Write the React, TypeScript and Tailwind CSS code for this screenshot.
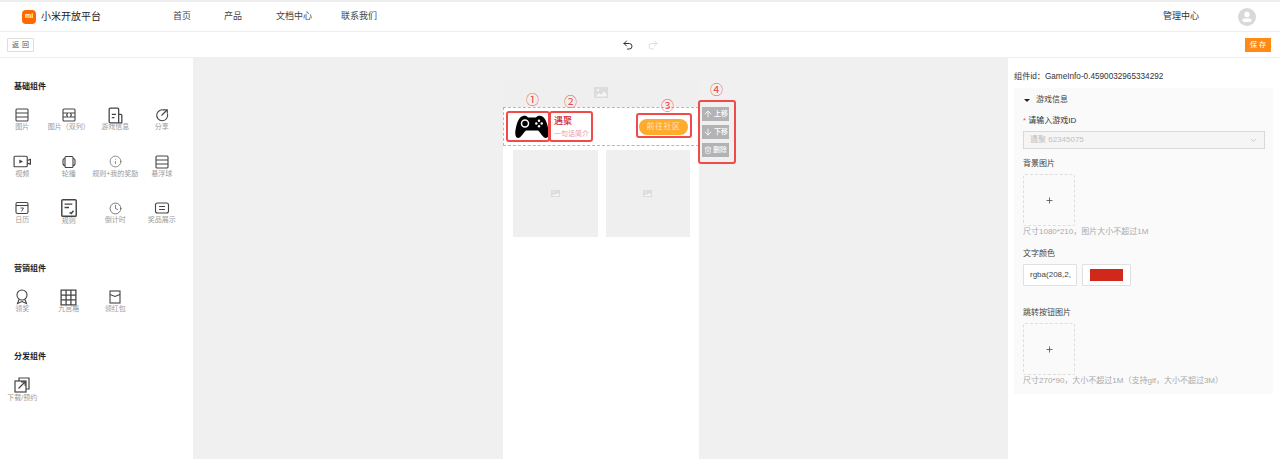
import { ArrowDown, ArrowUp, ChevronDown, Clock, Info, Plus, Redo2, Trash2, Undo2 } from "lucide-react"
import type { ReactNode } from "react"

const font = { fontFamily: '"Liberation Sans", "Noto Sans CJK SC", sans-serif' }

type TileItem = { label: string; icon: ReactNode; tall?: boolean }

// little stroke icons for the component palette
function Ico({ children, size = 18, sw = 1.1 }: { children: ReactNode; size?: number; sw?: number }) {
  return (
    <svg width={size} height={size} viewBox="0 0 18 18" fill="none" stroke="#444" strokeWidth={sw}>
      {children}
    </svg>
  )
}

const rows = <><rect x="3" y="3" width="12" height="12" rx="1" /><path d="M3 7h12M3 11h12" /></>

const basic: TileItem[] = [
  { label: "图片", icon: <Ico>{rows}</Ico> },
  { label: "图片（双列）", icon: <Ico><rect x="3" y="3" width="12" height="12" rx="1" /><path d="M3 7h5l-1.500 2L8 11H3M15 7h-5l1.500 2L10 11h5" /></Ico> },
  { label: "游戏信息", icon: <Ico size={19} sw={1.200}><path d="M3 3a1 1 0 0 1 1-1h7a1 1 0 0 1 1 1v13H4a1 1 0 0 1-1-1zM12 8h2a1 1 0 0 1 1 1v7h-3M5.500 8h4M5.500 11h2.500" /></Ico> },
  { label: "分享", icon: <Ico><path d="M11.500 4.300a5.500 5.500 0 1 0 3 3.500M8.500 9.500L14 4M10.500 3.700H14.300V7.500" /></Ico> },
  { label: "视频", icon: <Ico size={19}><rect x="1" y="4" width="12.500" height="10" rx="1" /><path d="M13.500 8l3-1v4.500l-3-1" /><path d="M6 7l3.500 2L6 11z" fill="#444" stroke="none" /></Ico> },
  { label: "轮播", icon: <Ico><rect x="5" y="3.500" width="8" height="11" rx="1" /><path d="M5 5.500C3.500 5.500 3 6.500 3 7.500v3c0 1 .5 2 2 2M13 5.500c1.500 0 2 1 2 2v3c0 1-.5 2-2 2" /></Ico> },
  { label: "规则+我的奖励", icon: <Info size={13} strokeWidth={1.100} color="#444" /> },
  { label: "悬浮球", icon: <Ico>{rows}</Ico> },
  { label: "日历", icon: <Ico><rect x="3" y="3.500" width="12" height="11" rx="1.500" /><path d="M3 6.500h12" /><path d="M7.500 9h3L8.500 12.500" strokeWidth={0.900} /></Ico> },
  { label: "规则", tall: true, icon: <Ico size={20} sw={1.300}><rect x="2.500" y="1.500" width="13" height="15" rx="1" /><path d="M5 5.500h7M5 8.500h4M9.500 13l1.500 1 2-2.500" /></Ico> },
  { label: "倒计时", icon: <Clock size={13} strokeWidth={1.300} color="#444" /> },
  { label: "奖品展示", icon: <Ico><rect x="2.500" y="4" width="13" height="10" rx="2" /><path d="M6 7.500h6M6 10.500h6" /></Ico> },
]

const marketing: TileItem[] = [
  { label: "领奖", icon: <Ico><circle cx="9" cy="7" r="5" /><path d="M6 11.500L4.500 15.500 9 13.500l4.500 2-1.500-4" /></Ico> },
  { label: "九宫格", icon: <Ico size={19} sw={1.200}><rect x="2" y="2" width="14" height="14" /><path d="M6.700 2v14M11.300 2v14M2 6.700h14M2 11.300h14" /></Ico> },
  { label: "领红包", icon: <Ico><rect x="4" y="3" width="10" height="12" /><path d="M4 6.500l5 2 5-2" /></Ico> },
]

const publish: TileItem[] = [
  { label: "下载/预约", tall: true, icon: <Ico size={18} sw={1.200}><path d="M6 5V2h10v11h-3" /><rect x="2" y="5" width="11" height="11" /><path d="M5.500 12.500L12 6M8 5.800h4.200V10" /></Ico> },
]

function Tile({ icon, label, tall }: TileItem) {
  return (
    <div className="flex flex-col items-center">
      <div className="flex h-[18px] items-center justify-center">{icon}</div>
      <span className={`whitespace-nowrap text-[7px] leading-[12px] text-[#9a9a9a] ${tall ? "-mt-[2px]" : "-mt-[3px]"}`}>{label}</span>
    </div>
  )
}

function TileGrid({ items, className }: { items: TileItem[]; className: string }) {
  return (
    <div className={`-ml-[1px] grid h-auto w-[186px] auto-rows-[27px] grid-cols-4 gap-y-[19.500px] ${className}`}>
      {items.map((item) => (
        <Tile key={item.label} {...item} />
      ))}
    </div>
  )
}

function SidePanel() {
  return (
    <div className="w-[193px] shrink-0 bg-white pt-[23px]">
      <h3 className="pl-[14px] text-[8px] font-bold leading-[12px] text-[#222]">基础组件</h3>
      <TileGrid items={basic} className="mt-[13px]" />
      <h3 className="mt-[37px] pl-[14px] text-[8px] font-bold leading-[12px] text-[#222]">营销组件</h3>
      <TileGrid items={marketing} className="mt-[13px]" />
      <h3 className="mt-[36px] pl-[14px] text-[8px] font-bold leading-[12px] text-[#222]">分发组件</h3>
      <TileGrid items={publish} className="mt-[13px]" />
    </div>
  )
}

function PicIcon({ w, h, color }: { w: number; h: number; color: string }) {
  return (
    <svg width={w} height={h} viewBox="0 0 14 11">
      <rect width="14" height="11" fill={color} />
      <circle cx="4" cy="3" r="1.200" fill="#f5f5f5" />
      <path d="M1.500 9.500L5 6l2 2 3-3.500 2.500 3v2z" fill="#f5f5f5" />
    </svg>
  )
}

function Canvas() {
  return (
    <div className="flex flex-1 justify-center bg-[#f0f0f0] pl-[1px] pt-[22px]">
      <div className="relative w-[196px] bg-white">
        <div className="flex h-[27px] items-center justify-center bg-[#efefef] pb-[2px]">
          <PicIcon w={14} h={11} color="#dcdcdc" />
        </div>

        {/* selected game row */}
        <div className="flex h-[39px] items-center justify-between border border-dashed border-[#ffa940] pl-[11px] pr-[10px]">
          <div className="flex items-center gap-[5px]">
            <svg width="34" height="24" viewBox="0 0 34 24">
              <path d="M8 1c2-.5 4 0 5 1.500h8C22 1 24 .5 26 1c4 1 6 6 7.500 14 .7 4.500 0 8-2.500 8-3 0-5-5-8-7.500H11C8 18 6 23 3 23c-2.500 0-3.200-3.500-2.500-8C2 7 4 2 8 1z" fill="#000" />
              <circle cx="10" cy="8.500" r="3.500" fill="none" stroke="#fff" strokeWidth="1.500" />
              <circle cx="24" cy="5.800" r="1.200" fill="#fff" />
              <circle cx="24" cy="11.200" r="1.200" fill="#fff" />
              <circle cx="21.300" cy="8.500" r="1.200" fill="#fff" />
              <circle cx="26.700" cy="8.500" r="1.200" fill="#fff" />
            </svg>
            <div className="leading-none">
              <div className="text-[9px] font-medium leading-[12px] text-[#d0283b]">遇聚</div>
              <div className="mt-[2px] text-[7px] leading-[9px] text-[#eb9ab0]">一句话简介</div>
            </div>
          </div>
          <div className="flex h-[16px] w-[49px] items-center justify-center rounded-full bg-[#ffab2e] text-[8px] tracking-[0.5px] text-white/70">前往社区</div>
        </div>

        <div className="mt-[4px] flex gap-[8px] pl-[10px]">
          {[0, 1].map((i) => (
            <div key={i} className="flex h-[87px] w-[84.500px] items-center justify-center bg-[#efefef]">
              <PicIcon w={9} h={7} color="#dcdcdc" />
            </div>
          ))}
        </div>

        {/* annotations on top of the canvas */}
        <span className="absolute left-[23px] top-[12px] text-[13px] leading-[15px] text-[#f04a4a]">①</span>
        <span className="absolute left-[61px] top-[14px] text-[13px] leading-[15px] text-[#f04a4a]">②</span>
        <span className="absolute left-[158px] top-[18px] text-[13px] leading-[15px] text-[#f04a4a]">③</span>
        <span className="absolute left-[207px] top-[2px] text-[13px] leading-[15px] text-[#f04a4a]">④</span>
        <div className="absolute left-[3px] top-[31px] h-[31px] w-[44px] rounded-[3px] border-[2px] border-[#f04a4a]" />
        <div className="absolute left-[46px] top-[31px] h-[31px] w-[44px] rounded-[3px] border-[2px] border-[#f04a4a]" />
        <div className="absolute left-[133px] top-[33px] h-[25px] w-[56px] rounded-[3px] border-[2px] border-[#f04a4a]" />

        <div className="absolute left-[195px] top-[20px] flex h-[64px] w-[38px] flex-col items-start justify-center gap-[4px] rounded-[3px] border-[2px] border-[#f04a4a] bg-[#f0f0f0] pl-[2px]">
          {[
            { label: "上移", icon: <ArrowUp size={10} /> },
            { label: "下移", icon: <ArrowDown size={10} /> },
            { label: "删除", icon: <Trash2 size={8} /> },
          ].map((b) => (
            <div key={b.label} className="flex h-[14px] w-[27px] shrink-0 items-center justify-center gap-[1px] bg-[#b3b3b3] text-[7px] font-medium text-white">
              {b.icon}
              <span>{b.label}</span>
            </div>
          ))}
        </div>
      </div>
    </div>
  )
}

function Upload({ hint }: { hint: string }) {
  return (
    <>
      <div className="flex h-[52px] w-[52px] items-center justify-center rounded-[2px] border border-dashed border-[#dedede] bg-[#fafafa]">
        <Plus size={9} color="#444" />
      </div>
      <p className="whitespace-nowrap text-[8px] leading-[12px] text-[#aaa]">{hint}</p>
    </>
  )
}

function SettingsPanel() {
  return (
    <div className="w-[272px] shrink-0 bg-white pl-[6px] pr-[7px] pt-[13px]">
      <p className="whitespace-nowrap text-[8.200px] leading-[12px] text-[#333]">组件id：GameInfo-0.4590032965334292</p>
      <div className="mt-[5px] h-[306px] bg-[#fafafa] pl-[9px] pr-[8px]">
        <div className="flex h-[24px] items-center gap-[6px] pl-[1px] text-[8px] text-[#444]">
          <span className="h-0 w-0 border-x-[3px] border-t-[3px] border-x-transparent border-t-[#222]" />
          游戏信息
        </div>
        <p className="mt-[3px] text-[8px] leading-[12px] text-[#333]"><span className="text-[#ff4d4f]">* </span>请输入游戏ID</p>
        <div className="mt-[4px] flex h-[18px] w-[242px] items-center justify-between border border-[#d9d9d9] bg-[#f5f5f5] pl-[6px] pr-[6px] text-[8px] text-[#bfbfbf]">
          遇聚 62345075
          <ChevronDown size={9} color="#bfbfbf" />
        </div>
        <p className="mb-[4px] mt-[9px] text-[8px] leading-[12px] text-[#444]">背景图片</p>
        <Upload hint="尺寸1080*210，图片大小不超过1M" />
        <p className="mb-[4px] mt-[10px] text-[8px] leading-[12px] text-[#444]">文字颜色</p>
        <div className="flex gap-[5px]">
          <div className="flex h-[22px] w-[54px] items-center rounded-[1px] border border-[#e0e0e0] bg-white pl-[6px] text-[8px] text-[#444]">rgba(208,2,</div>
          <div className="flex h-[22px] w-[49px] items-center justify-center rounded-[1px] border border-[#e0e0e0] bg-white">
            <div className="h-[12px] w-[33px] bg-[#d0281b]" />
          </div>
        </div>
        <p className="mb-[4px] mt-[21px] text-[8px] leading-[12px] text-[#444]">跳转按钮图片</p>
        <Upload hint="尺寸270*90，大小不超过1M（支持gif，大小不超过3M）" />
      </div>
    </div>
  )
}

export default function App() {
  return (
    <div className="flex h-[459px] flex-col overflow-hidden bg-white" style={font}>
      <div className="h-[2px] shrink-0 bg-[#eee]" />
      <header className="flex h-[30px] shrink-0 items-center border-b border-[#eee] pl-[22px] pr-[24px]">
        <div className="flex h-[14px] w-[14px] items-center justify-center rounded-[4px] bg-[#ff6900] text-[7px] font-bold text-white">mi</div>
        <span className="ml-[5px] text-[10px] text-[#222]">小米开放平台</span>
        <nav className="ml-[72px] flex text-[9px] text-[#444]">
          <span>首页</span>
          <span className="ml-[33px]">产品</span>
          <span className="ml-[34px]">文档中心</span>
          <span className="ml-[29px]">联系我们</span>
        </nav>
        <span className="ml-auto text-[9px] text-[#333]">管理中心</span>
        <div className="ml-[39px] flex h-[18px] w-[18px] items-center justify-center rounded-full bg-[#d9d9d9]">
          <svg width="12" height="12" viewBox="0 0 12 12" fill="#fff">
            <circle cx="6" cy="3.500" r="2.700" />
            <rect x="1.500" y="7.500" width="9" height="3.500" rx="1.700" />
          </svg>
        </div>
      </header>

      <div className="relative flex h-[26px] shrink-0 items-center justify-center border-b border-[#eee]">
        <div className="absolute left-[7px] top-[6px] flex h-[14px] w-[27px] items-center justify-center rounded-[1px] border border-[#ddd] pl-[3px] text-[7px] tracking-[3px] text-[#555]">返回</div>
        <div className="flex gap-[13px]">
          <Undo2 size={12} color="#333" />
          <Redo2 size={12} color="#ddd" />
        </div>
        <div className="absolute right-[9px] top-[6px] flex h-[14px] w-[26px] items-center justify-center bg-[#ff8a14] pl-[2px] text-[7px] tracking-[2px] text-white">保存</div>
      </div>

      <main className="flex min-h-0 flex-1">
        <SidePanel />
        <Canvas />
        <SettingsPanel />
      </main>
    </div>
  )
}
